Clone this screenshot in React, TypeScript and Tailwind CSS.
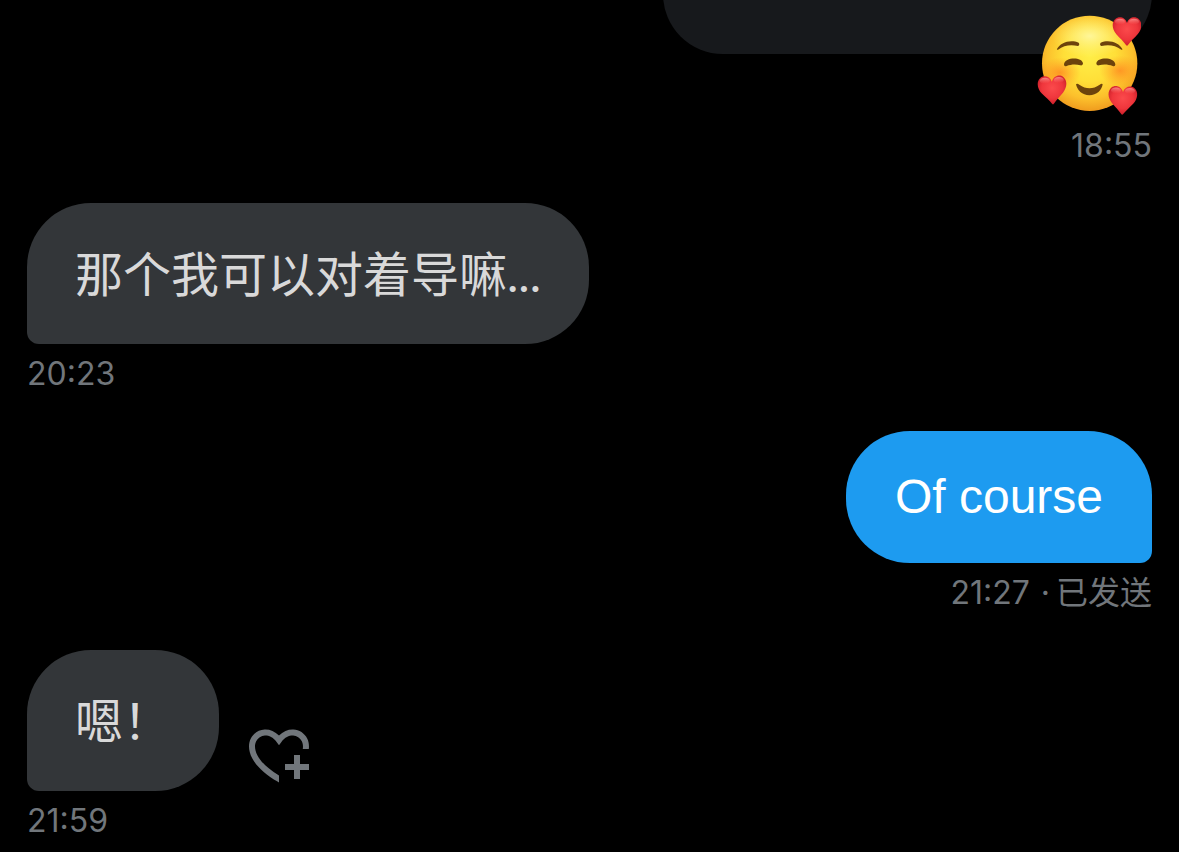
import clsx from 'clsx'

interface Message {
  id: number
  text: string
  time: string
  status?: string
  sent?: boolean
  canReact?: boolean
}

const messages: Message[] = [
  { id: 1, text: '那个我可以对着导嘛...', time: '20:23' },
  { id: 2, text: 'Of course', time: '21:27', status: '已发送', sent: true },
  { id: 3, text: '嗯！', time: '21:59', canReact: true },
]

const HEART = 'M0 -25C-5 -42 -24 -47 -35 -37C-47 -26 -45 -6 -32 9C-21 21 -10 31 -3 41C-1 44 1 44 3 41C10 31 21 21 32 9C45 -6 47 -26 35 -37C24 -47 5 -42 0 -25Z'

function SmilingHearts() {
  return (
    <svg viewBox="51 42 312 306" role="img" aria-label="smiling face with hearts" className="h-[102px] w-[104px]">
      <defs>
        <radialGradient id="face" cx="0.5" cy="0.42" r="0.6">
          <stop offset="0" stopColor="#ffee48" />
          <stop offset="0.45" stopColor="#ffdf38" />
          <stop offset="0.75" stopColor="#fcc02c" />
          <stop offset="1" stopColor="#ee961c" />
        </radialGradient>
        <radialGradient id="glow">
          <stop offset="0" stopColor="#fffbb0" stopOpacity="0.8" />
          <stop offset="1" stopColor="#fff78a" stopOpacity="0" />
        </radialGradient>
        <radialGradient id="blush">
          <stop offset="0" stopColor="#ff8420" stopOpacity="0.75" />
          <stop offset="1" stopColor="#ff9420" stopOpacity="0" />
        </radialGradient>
        <radialGradient id="heart" cx="0.5" cy="0.42" r="0.6">
          <stop offset="0" stopColor="#fb4a4c" />
          <stop offset="0.6" stopColor="#ef363c" />
          <stop offset="1" stopColor="#c81c28" />
        </radialGradient>
        <linearGradient id="shine" x1="0" y1="0" x2="0" y2="1">
          <stop offset="0" stopColor="#ffb8b2" stopOpacity="0.65" />
          <stop offset="1" stopColor="#ff7a70" stopOpacity="0" />
        </linearGradient>
        <g id="loveHeart">
          <path d={HEART} fill="url(#heart)" />
          <ellipse cx="-21" cy="-29" rx="15" ry="9" fill="url(#shine)" />
          <ellipse cx="21" cy="-29" rx="15" ry="9" fill="url(#shine)" />
        </g>
        <clipPath id="faceClip">
          <circle cx="209" cy="190" r="143" />
        </clipPath>
      </defs>
      <circle cx="209" cy="190" r="143" fill="url(#face)" />
      <g clipPath="url(#faceClip)">
        <ellipse cx="209" cy="108" rx="112" ry="64" fill="url(#glow)" />
        <ellipse cx="120" cy="218" rx="62" ry="46" fill="url(#blush)" />
        <ellipse cx="300" cy="212" rx="62" ry="46" fill="url(#blush)" />
      </g>
      <g fill="#6d430c">
        <path d="M111 147C120 128 151 117 176 128C179 131 178 137 174 138C151 133 132 136 114 149C111 150 110 149 111 147Z" />
        <path d="M307 147C298 128 267 117 242 128C239 131 240 137 244 138C267 133 286 136 304 149C307 150 308 149 307 147Z" />
        <path d="M132 193C134 171 186 170 189 190C189 195 185 197 181 196C168 192 153 193 140 198C135 200 132 198 132 193Z" />
        <path d="M286 193C284 171 232 170 229 190C229 195 233 197 237 196C250 192 265 193 278 198C283 200 286 198 286 193Z" />
        <path d="M168 253C170 250 174 251 178 254C198 268 219 268 239 254C243 251 247 250 248 253C246 270 230 286 208 286C187 286 171 270 168 253Z" />
      </g>
      <use href="#loveHeart" transform="translate(321 94)" />
      <use href="#loveHeart" transform="translate(97 270) rotate(-3)" />
      <use href="#loveHeart" transform="translate(308 301) rotate(2)" />
    </svg>
  )
}

function Timestamp({ time, status }: { time: string; status?: string }) {
  return (
    <p className="mt-[10px] font-['Inter','Noto_Sans_CJK_SC',sans-serif] text-[32px] leading-10 text-[#71767b]">
      <time>{time}</time>
      {status && (
        <>
          {' '}
          <span className="ml-0.5 mr-1.5">·</span>
          {status}
        </>
      )}
    </p>
  )
}

function MessageRow({ message }: { message: Message }) {
  const { text, time, status, sent, canReact } = message
  return (
    <li className={clsx('flex flex-col', sent ? 'items-end' : 'items-start')}>
      <div className="flex items-end gap-6">
        <p
          className={clsx(
            'rounded-[64px] py-[30px] text-5xl',
            sent
              ? "rounded-br-xl bg-[#1d9bf0] px-[49px] font-['Liberation_Sans','Noto_Sans_CJK_SC',sans-serif] leading-[72px] text-white"
              : "rounded-bl-xl bg-[#333639] px-12 font-['Lato','Noto_Sans_CJK_SC',sans-serif] leading-[81px] text-[#d9d9d9]"
          )}
        >
          {text}
        </p>
        {canReact && (
          <button type="button" aria-label="Add reaction" className="text-[#71767b]">
            <svg viewBox="0 0 24 24" fill="currentColor" className="size-[72px]">
              <path d="M17 12v3h-2.998v2h3v3h2v-3h3v-2h-3.001v-3H17zm-5 6.839c-3.871-2.34-6.053-4.639-7.127-6.609-1.112-2.04-1.031-3.7-.479-4.82.561-1.13 1.667-1.84 2.91-1.91 1.222-.06 2.68.51 3.892 2.16l.806 1.09.805-1.09c1.211-1.65 2.668-2.22 3.89-2.16 1.242.07 2.347.78 2.908 1.91.334.677.49 1.554.321 2.59h2.011c.153-1.283-.039-2.469-.539-3.48-.887-1.79-2.647-2.91-4.601-3.01-1.65-.09-3.367.56-4.796 2.01-1.43-1.45-3.147-2.1-4.798-2.01-1.954.1-3.714 1.22-4.601 3.01-.896 1.81-.846 4.17.514 6.67 1.353 2.48 4.003 5.12 8.382 7.67l.502.299v-2.32z" />
            </svg>
          </button>
        )}
      </div>
      <Timestamp time={time} status={status} />
    </li>
  )
}

export default function App() {
  return (
    <main className="min-h-screen bg-black px-[27px]">
      <ul className="flex flex-col gap-[37px]">
        <li className="flex flex-col items-end">
          {/* tail of a message scrolled off the top */}
          <div className="h-[54px] w-[489px] overflow-hidden">
            <div className="-mt-3 h-[66px] rounded-b-[60px] bg-[#17191c]" />
          </div>
          <div className="-mt-10 mr-[11px]">
            <SmilingHearts />
          </div>
          <Timestamp time="18:55" />
        </li>
        {messages.map((m) => (
          <MessageRow key={m.id} message={m} />
        ))}
      </ul>
    </main>
  )
}
